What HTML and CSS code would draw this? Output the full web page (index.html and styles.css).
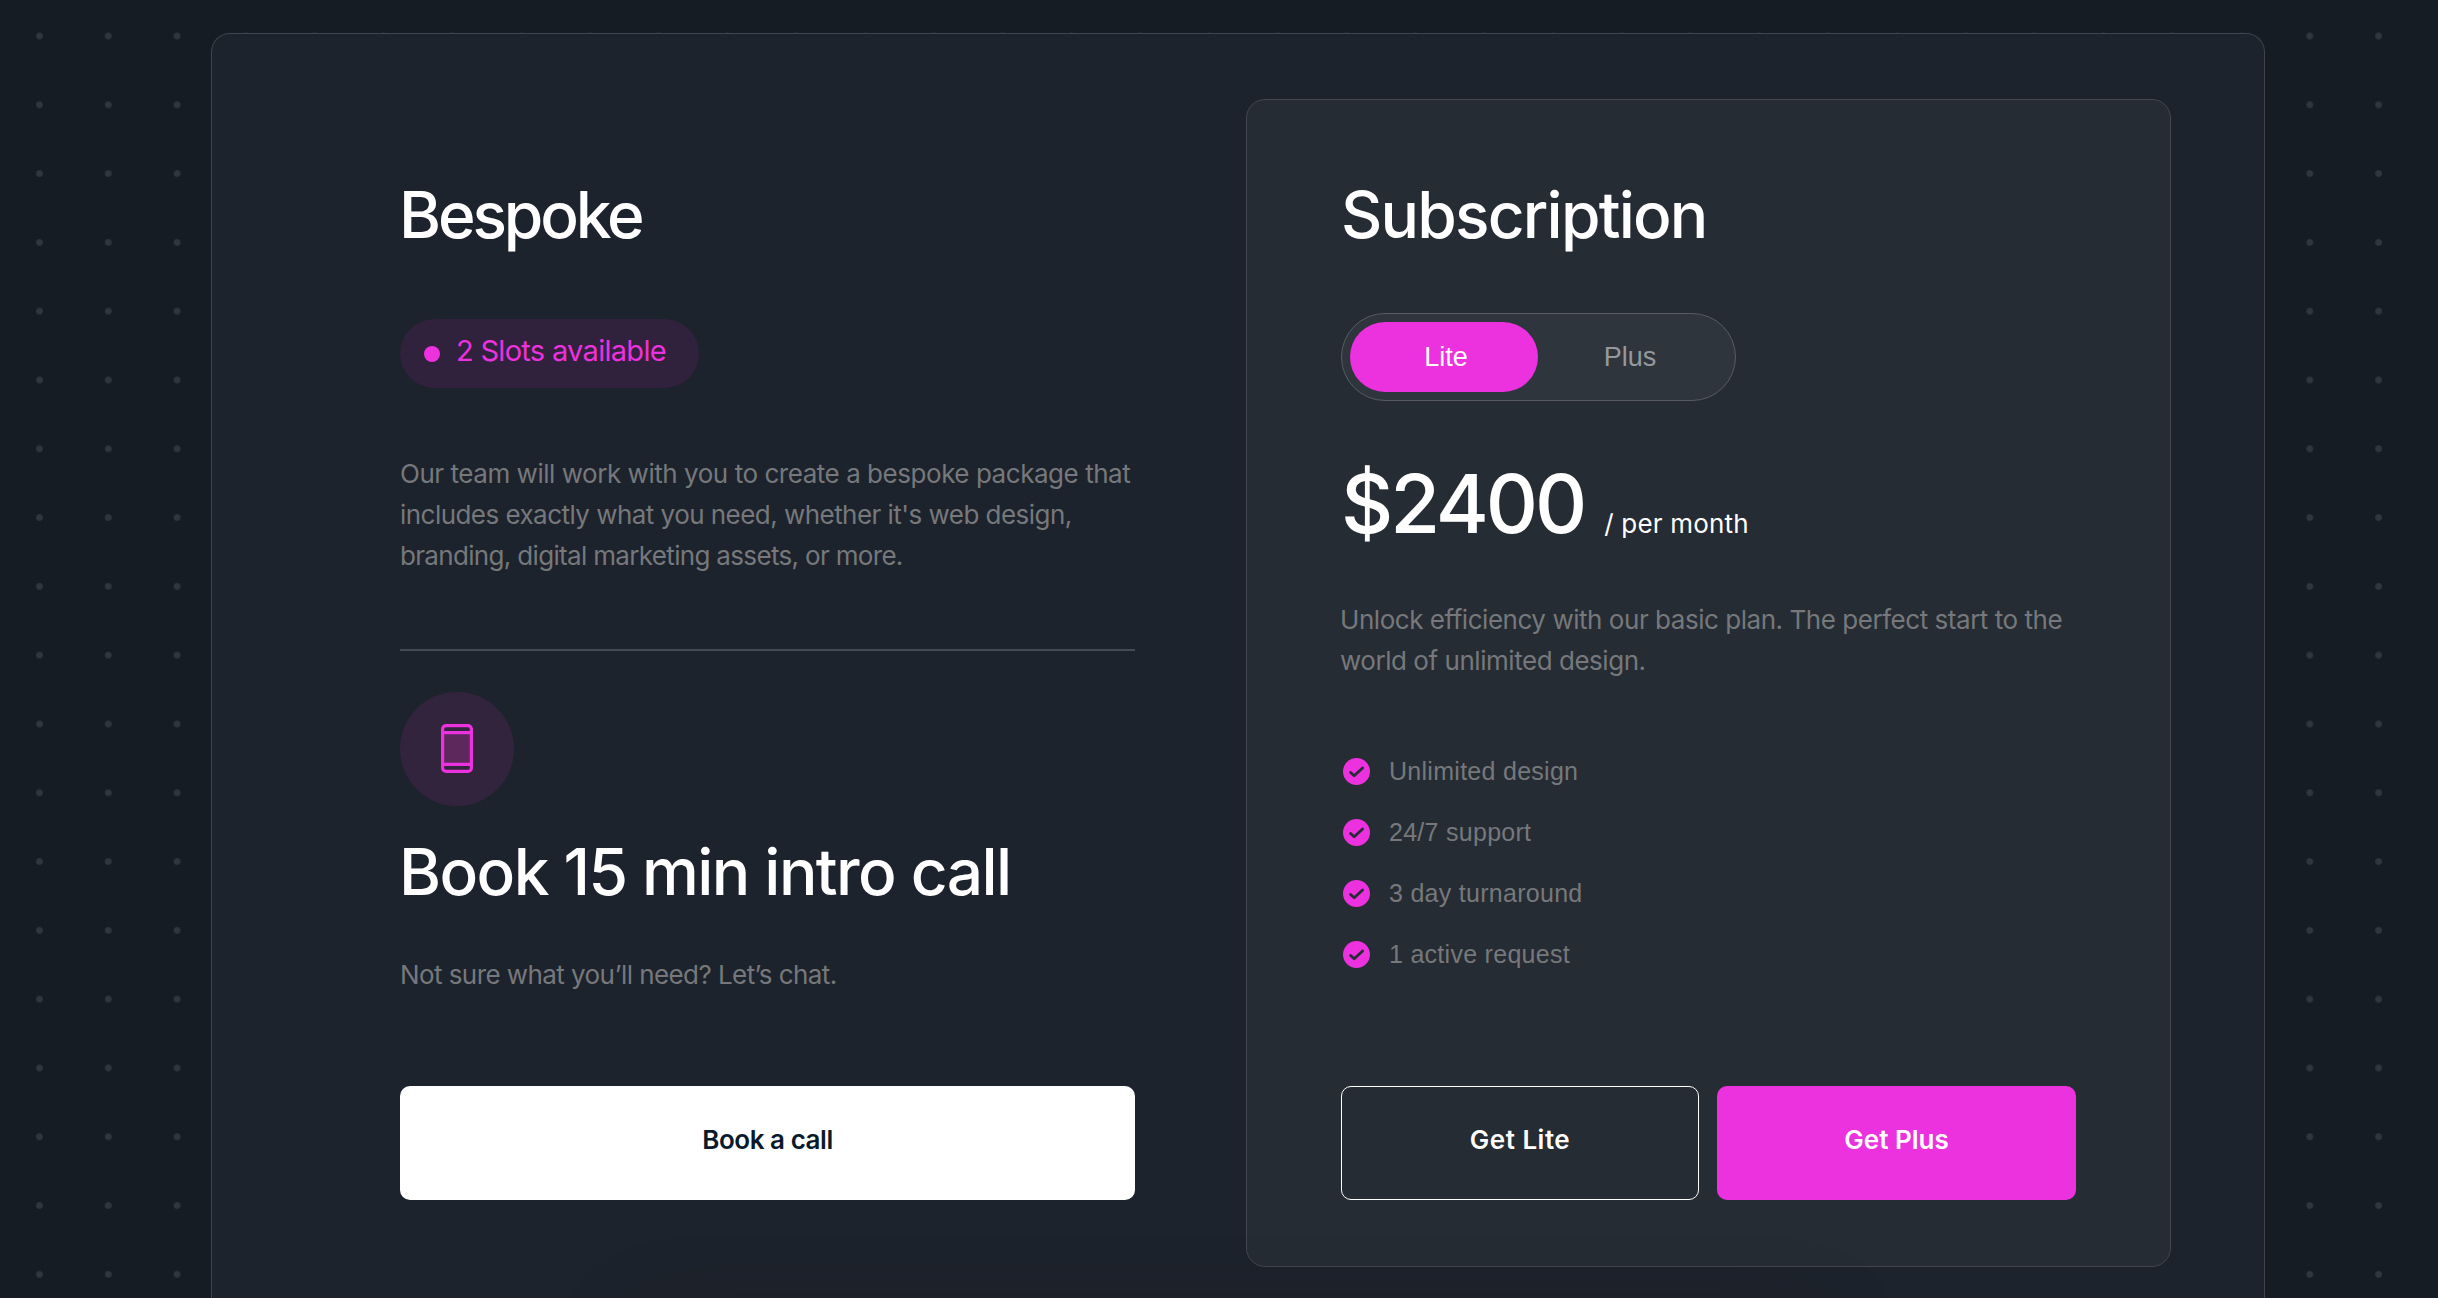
FILE: index.html
```
<!DOCTYPE html>
<html lang="en">
<head>
    <meta charset="UTF-8">
    <meta name="viewport" content="width=device-width, initial-scale=1.0">
    <title>Pricing</title>
    <link rel="stylesheet" href="styles.css">
</head>
<body>
    <main class="pricing">
        <section class="plan bespoke">
            <h2 class="bespoke-title">Bespoke</h2>
            <div class="badge"><span class="badge-dot"></span><span class="badge-text">2 Slots available</span></div>
            <p class="bespoke-text">Our team will work with you to create a bespoke package that<br><span class="snug">includes exactly what you need, whether it's web design,</span><br><span class="tight">branding, digital marketing assets, or more.</span></p>
            <hr>
            <div class="icon-circle">
                <svg width="32" height="49" viewBox="0 0 32 49" fill="none" stroke="#ec31de" stroke-width="3.2">
                    <rect x="3" y="9" width="26" height="31" fill="#5d295d" stroke="none"/>
                    <rect x="1.6" y="1.6" width="28.8" height="45.8" rx="3.5"/>
                    <path d="M2 8.6h28M2 40.4h28"/>
                </svg>
            </div>
            <h2 class="intro-title">Book 15 min intro call</h2>
            <p class="intro-text">Not sure what you’ll need? Let’s chat.</p>
            <div class="actions">
                <a href="#" class="btn btn-white">Book a call</a>
            </div>
        </section>

        <section class="plan subscription">
            <h2 class="subscription-title">Subscription</h2>
            <div class="toggle">
                <button class="tab active">Lite</button>
                <button class="tab">Plus</button>
            </div>
            <div class="price"><span class="amount">$2400</span><span class="period">/ per month</span></div>
            <p class="subscription-text">Unlock efficiency with our basic plan. The perfect start to the<br>world of unlimited design.</p>
            <ul class="features">
                <li><svg class="check" viewBox="0 0 27 27"><circle cx="13.5" cy="13.5" r="13.5"/><path d="M7.6 14.4l3.6 3.4 8.4-7.8"/></svg>Unlimited design</li>
                <li><svg class="check" viewBox="0 0 27 27"><circle cx="13.5" cy="13.5" r="13.5"/><path d="M7.6 14.4l3.6 3.4 8.4-7.8"/></svg>24/7 support</li>
                <li><svg class="check" viewBox="0 0 27 27"><circle cx="13.5" cy="13.5" r="13.5"/><path d="M7.6 14.4l3.6 3.4 8.4-7.8"/></svg>3 day turnaround</li>
                <li><svg class="check" viewBox="0 0 27 27"><circle cx="13.5" cy="13.5" r="13.5"/><path d="M7.6 14.4l3.6 3.4 8.4-7.8"/></svg>1 active request</li>
            </ul>
            <div class="actions">
                <a href="#" class="btn btn-outline">Get Lite</a>
                <a href="#" class="btn btn-pink">Get Plus</a>
            </div>
        </section>
    </main>
    <div class="bottom-shadow"></div>
</body>
</html>
```
FILE: styles.css
```
* {
    box-sizing: border-box;
}
html {
    overflow: hidden;
}
body {
    margin: 0;
    height: 1298px;
    overflow: hidden;
    position: relative;
    padding: 33px 173px 0 211px;
    font-family: Inter, "Liberation Sans", sans-serif;
    color: #fff;
    background-color: #151c23;
    background-image: radial-gradient(circle, #2f363e 2.9px, transparent 3.9px);
    background-size: 68.8px 68.8px;
    background-position: 5.1px 1.6px;
}
h2, p, ul {
    margin: 0;
    padding: 0;
}
.pricing {
    display: flex;
    width: 2054px;
    height: 1265px;
    padding: 65px 93px 0 188px;
    align-items: flex-start;
    justify-content: space-between;
    background-color: #1d232c;
    border: 1px solid #3f444d;
    border-bottom: none;
    border-radius: 19px 19px 0 0;
}
.plan {
    display: flex;
    flex-direction: column;
    height: 1168px;
    padding-bottom: 67px;
}
.bespoke {
    width: 735px;
    padding-top: 78px;
}
.subscription {
    width: 925px;
    padding: 77px 94px 66px;
    background-color: #262c33;
    border: 1px solid #44464f;
    border-radius: 19px;
}
h2 {
    font-size: 64px;
    font-weight: 500;
    line-height: 76px;
    white-space: nowrap;
}
p {
    font-size: 26px;
    line-height: 41px;
    letter-spacing: -0.46px;
    color: #76787b;
    white-space: nowrap;
}
.bespoke-title {
    margin-left: -1px;
    letter-spacing: -3.1px;
}
.subscription-title {
    letter-spacing: -1.8px;
}
.badge {
    display: flex;
    align-items: center;
    width: 299px;
    height: 69px;
    margin-top: 66px;
    padding-left: 24px;
    border-radius: 35px;
    background-color: #30213c;
    color: #ec31de;
}
.badge-dot {
    width: 16px;
    height: 16px;
    margin-right: 16px;
    border-radius: 50%;
    background-color: #ec31de;
}
.badge-text {
    padding-bottom: 6px;
    font-size: 29px;
    letter-spacing: -0.7px;
    white-space: nowrap;
}
.bespoke-text {
    margin-top: 65px;
}
.snug {
    letter-spacing: -0.54px;
}
.tight {
    letter-spacing: -0.67px;
}
hr {
    width: 100%;
    height: 2px;
    margin: 73px 0 41px;
    border: none;
    background-color: #444b54;
}
.icon-circle {
    display: flex;
    align-items: center;
    justify-content: center;
    width: 114px;
    height: 114px;
    padding-bottom: 1px;
    border-radius: 50%;
    background-color: #33243d;
}
.intro-title {
    margin-top: 28px;
    margin-left: -1px;
    letter-spacing: -1.55px;
}
.intro-text {
    margin-top: 44px;
    letter-spacing: -0.57px;
}
.actions {
    display: flex;
    justify-content: space-between;
    margin-top: auto;
}
.btn {
    display: flex;
    width: 358px;
    align-items: center;
    justify-content: center;
    height: 114px;
    padding-bottom: 7px;
    border-radius: 10px;
    font-size: 26px;
    font-weight: 600;
    text-decoration: none;
    color: #fff;
}
.btn-white {
    width: 100%;
    background-color: #fff;
    letter-spacing: -0.45px;
    color: #0b1a2a;
}
.btn-outline {
    border: 1px solid #fff;
    letter-spacing: 0.5px;
}
.btn-pink {
    width: 359px;
    background-color: #ec31de;
}
.toggle {
    display: flex;
    width: 395px;
    height: 88px;
    margin-top: 60px;
    padding: 8px;
    border: 1px solid #585b63;
    border-radius: 44px;
    background-color: #2f353c;
}
.tab {
    width: 180px;
    height: 70px;
    padding: 0 0 0 4px;
    border: none;
    border-radius: 35px;
    background: none;
    font-family: "Liberation Sans", Arial, sans-serif;
    font-size: 27px;
    color: #95989c;
}
.tab.active {
    width: 188px;
    background-color: #ec31de;
    color: #fff;
}
.price {
    display: flex;
    align-items: baseline;
    gap: 20px;
    height: 96px;
    margin-top: 55px;
    line-height: 96px;
}
.amount {
    font-size: 81px;
    font-weight: 500;
    letter-spacing: -3.1px;
}
.period {
    font-size: 26px;
    letter-spacing: 0.2px;
}
.subscription-text {
    margin-top: 47px;
    margin-left: -1px;
}
.features {
    margin-top: 59.4px;
    list-style: none;
    font-family: "Liberation Sans", Arial, sans-serif;
    font-size: 25px;
    letter-spacing: 0.28px;
    color: #76787b;
}
.features li {
    display: flex;
    align-items: center;
    gap: 19px;
    height: 61.3px;
    padding-left: 2px;
}
.check {
    width: 27px;
    height: 27px;
    fill: #ec31de;
}
.check path {
    fill: none;
    stroke: #262c33;
    stroke-width: 2.7;
    stroke-linecap: round;
    stroke-linejoin: round;
}
.bottom-shadow {
    position: absolute;
    left: 650px;
    top: 1330px;
    width: 1160px;
    height: 200px;
    border-radius: 30px;
    box-shadow: 0 0 80px rgba(28, 18, 28, 0.5);
}
```
